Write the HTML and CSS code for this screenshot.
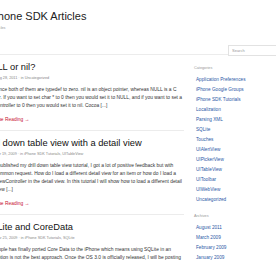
FILE: index.html
```html
<!DOCTYPE html>
<html lang="en">
<head>
    <meta charset="UTF-8">
    <title>iPhone SDK Articles</title>
    <link rel="stylesheet" href="styles.css">
</head>
<body>

<div class="page">
    <div class="header">
        <div class="brand">
            <h1>iPhone SDK Articles</h1>
            <div class="tagline">All Articles</div>
        </div>
        <input type="text" class="search" placeholder="Search">
    </div>

    <div class="columns">
        <div class="content">
            <div class="post">
                <h2>NULL or nil?</h2>
                <div class="meta">Aug 28, 2011 &middot; in Uncategorized</div>
                <p class="excerpt">Since both of them are typedef to zero. nil is an object pointer, whereas NULL is a C
                    ptr. If you want to set char * to 0 then you would set it to NULL, and if you want to set a
                    controller to 0 then you would set it to nil. Cocoa [...]</p>
                <a class="more" href="#">Continue Reading &rarr;</a>
            </div>

            <div class="post">
                <h2>Drill down table view with a detail view</h2>
                <div class="meta">Apr 19, 2009 &middot; in iPhone SDK Tutorials, UITableView</div>
                <p class="excerpt">I published my drill down table view tutorial, I got a lot of positive feedback but with
                    common request. How do I load a different detail view for an item or how do I load a
                    ViewController in the detail view. In this tutorial I will show how to load a different detail
                    view [...]</p>
                <a class="more" href="#">Continue Reading &rarr;</a>
            </div>

            <div class="post">
                <h2>SQLite and CoreData</h2>
                <div class="meta">Mar 25, 2009 &middot; in iPhone SDK Tutorials, SQLite</div>
                <p class="excerpt">Apple has finally ported Core Data to the iPhone which means using SQLite in an
                    option is not the best approach. Once the OS 3.0 is officially released, I will be posting
                    tutorials [...]</p>
            </div>
        </div>

        <div class="sidebar">
            <div class="widget-title">Categories</div>
            <ul class="links">
                <li><a href="#">Application Preferences</a></li>
                <li><a href="#">iPhone Google Groups</a></li>
                <li><a href="#">iPhone SDK Tutorials</a></li>
                <li><a href="#">Localization</a></li>
                <li><a href="#">Parsing XML</a></li>
                <li><a href="#">SQLite</a></li>
                <li><a href="#">Touches</a></li>
                <li><a href="#">UIAlertView</a></li>
                <li><a href="#">UIPickerView</a></li>
                <li><a href="#">UITableView</a></li>
                <li><a href="#">UIToolbar</a></li>
                <li><a href="#">UIWebView</a></li>
                <li><a href="#">Uncategorized</a></li>
            </ul>

            <div class="widget-title archives">Archives</div>
            <ul class="links">
                <li><a href="#">August 2011</a></li>
                <li><a href="#">March 2009</a></li>
                <li><a href="#">February 2009</a></li>
                <li><a href="#">January 2009</a></li>
            </ul>
        </div>
    </div>
</div>

</body>
</html>
```

FILE: styles.css
```css
body {
    margin: 0;
    background: #fff;
    color: #333;
    font-family: 'Liberation Sans', Arial, sans-serif;
    overflow: hidden;
}

.page {
    width: 320px;
    margin-left: -16px;
}

/* header */

.header {
    display: flex;
    align-items: flex-end;
    height: 54px;
    border-bottom: 1px solid #ececec;
}

.brand {
    flex: 1;
    align-self: flex-start;
    padding: 9px 0 0 4px;
}

h1 {
    margin: 0;
    font-size: 11px;
    font-weight: normal;
    line-height: 14px;
    color: #222;
}

.tagline {
    margin-top: 3px;
    font-size: 3.8px;
    line-height: 5px;
    color: #999;
}

.search {
    width: 76px;
    height: 11px;
    margin: 0 0 -2px 0;
    padding: 0 0 0 3px;
    border: 1px solid #e2e2e2;
    background: #fff;
    font-family: inherit;
    font-size: 4px;
    box-sizing: border-box;
}

.search::placeholder {
    color: #999;
}

/* columns */

.columns {
    display: flex;
}

.content {
    width: 200.4px;
}

.post {
    padding-top: 7px;
    border-bottom: 1px solid #ececec;
}

.post:last-child {
    border-bottom: none;
}

h2 {
    margin: 0 0 1.5px;
    font-size: 9.3px;
    font-weight: normal;
    line-height: 11px;
    color: #111;
    white-space: nowrap;
}

.meta {
    padding-left: 11px;
    font-size: 3.8px;
    line-height: 6px;
    color: #888;
    margin-bottom: 5px;
}

.excerpt {
    margin: 0;
    padding-left: 11px;
    font-size: 4.9px;
    line-height: 8px;
    color: #333;
}

.more {
    display: block;
    margin: 6.5px 0 6px;
    font-size: 4.9px;
    line-height: 8px;
    color: #c8102e;
    text-decoration: none;
}

/* sidebar */

.sidebar {
    margin-left: 8.6px;
    padding-top: 10px;
    flex: 1;
}

.widget-title {
    font-size: 3.8px;
    line-height: 6px;
    color: #999;
    padding-left: 1px;
    margin-bottom: 4px;
}

.widget-title.archives {
    margin-top: 8px;
}

.links {
    list-style: none;
    margin: 0;
    padding: 0 0 0 3px;
}

.links li {
    font-size: 4.7px;
    line-height: 10px;
}

.links a {
    color: #2b58a6;
    text-decoration: none;
}
```
